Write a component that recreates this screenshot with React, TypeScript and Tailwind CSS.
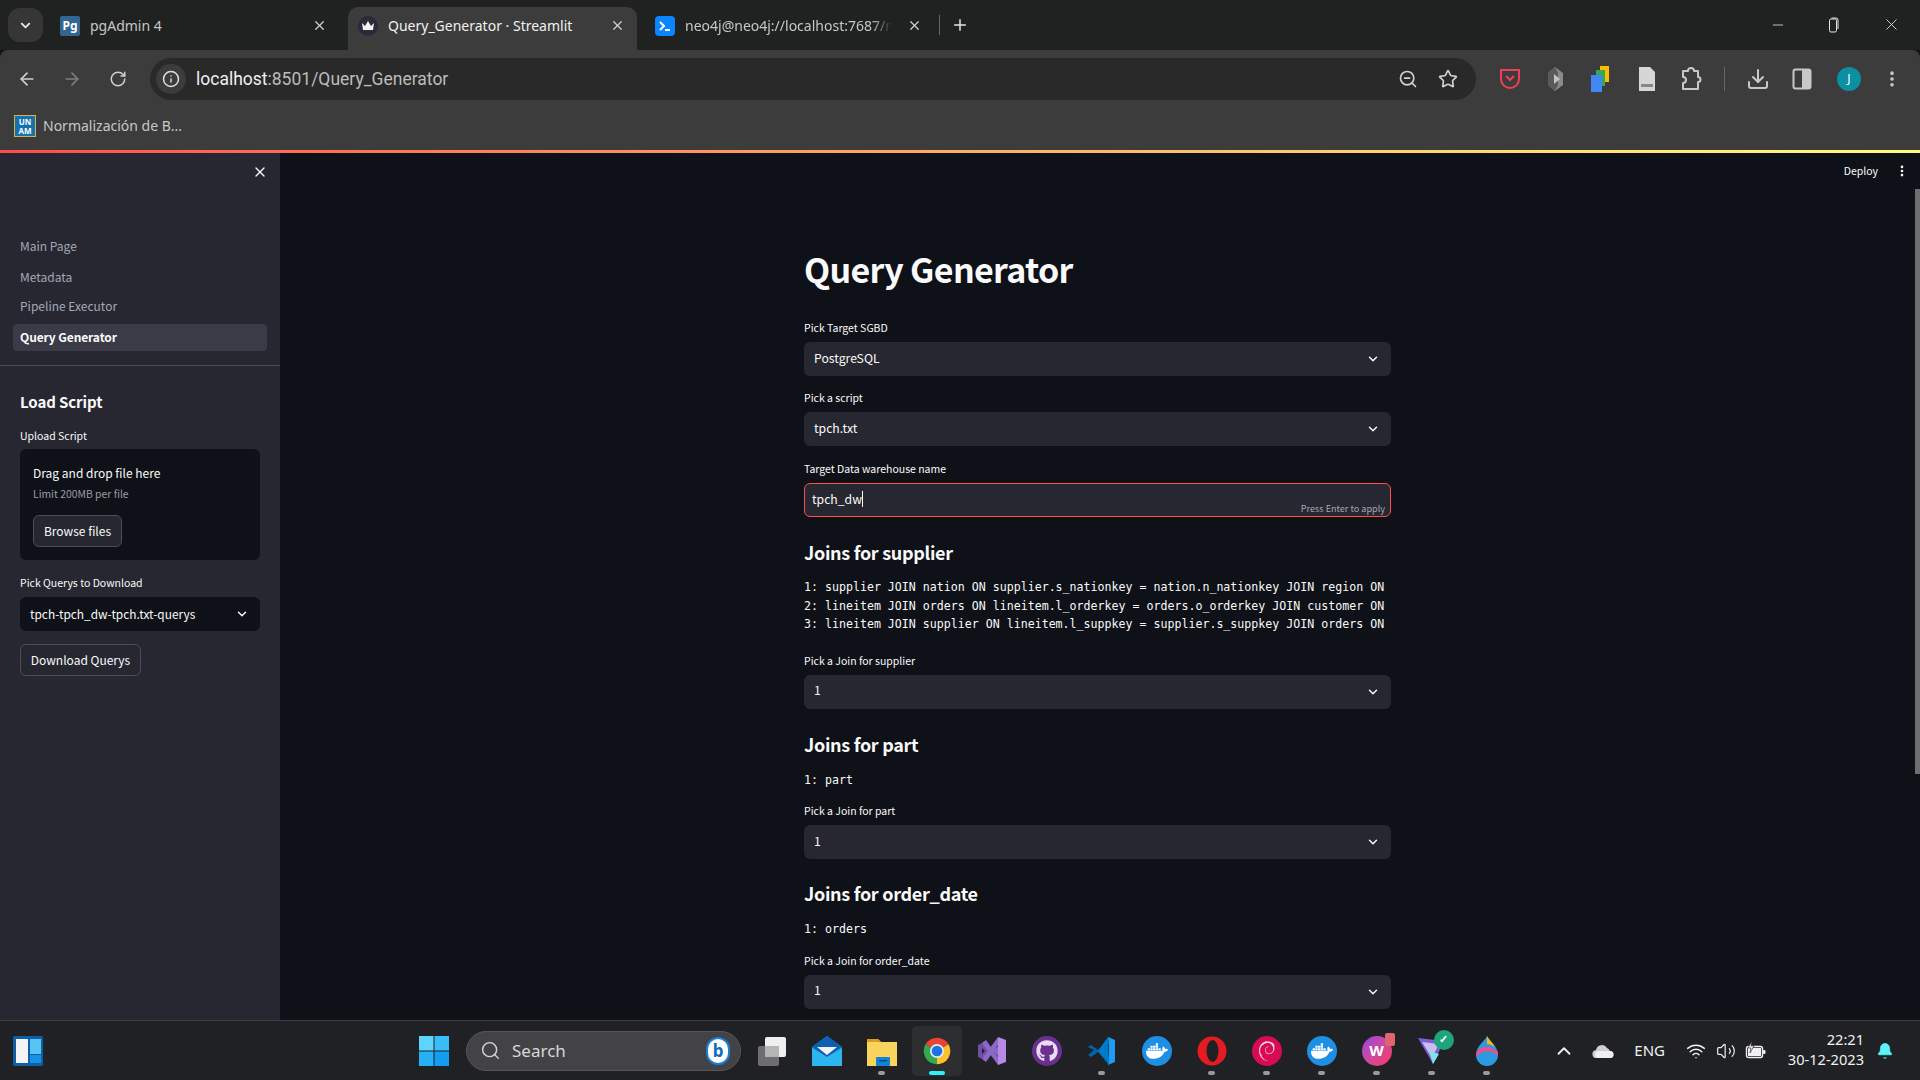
import React from "react";
import {
  ArrowLeft,
  ArrowRight,
  RotateCw,
  Info,
  ZoomOut,
  Star,
  Download,
  EllipsisVertical,
  ChevronDown,
  ChevronUp,
  X,
  Plus,
  Minus,
  Bell,
  Wifi,
  Volume2,
  Search,
} from "lucide-react";
import { FaDocker, FaGithub } from "react-icons/fa";
import { SiDebian } from "react-icons/si";

function Field({ label, value, className }: { label: string; value: string; className?: string }) {
  return (
    <div className={className}>
      <div className="mb-[7px] h-[14px] text-[10.5px] leading-[14px] text-[#fafafa]">{label}</div>
      <div className="flex h-[34px] items-center justify-between rounded-[6px] bg-[#262730] pl-[10px] pr-[11px] text-[12.2px] text-[#fafafa]">
        <span className="pb-[2px]">{value}</span>
        <ChevronDown size={14} strokeWidth={2.5} />
      </div>
    </div>
  );
}

function Heading({ children, className }: { children: React.ReactNode; className?: string }) {
  return <h3 className={`h-[32px] text-[18px] font-semibold leading-[30px] tracking-[-0.3px] text-[#fafafa] ${className}`}>{children}</h3>;
}

function Mono({ lines, className }: { lines: string[]; className?: string }) {
  return (
    <div className={`overflow-hidden whitespace-pre font-['DejaVu_Sans_Mono',monospace] text-[11.62px] leading-[18.5px] text-[#fafafa] ${className}`}>
      {lines.map((l) => (
        <div key={l}>{l}</div>
      ))}
    </div>
  );
}

function Tab({ icon, title, active, className, titleClass }: { icon: React.ReactNode; title: string; active?: boolean; className: string; titleClass?: string }) {
  return (
    <div className={`flex h-[43px] items-center rounded-t-[10px] pb-[6px] ${active ? "bg-[#3c3c3c] text-[#f1f1f1]" : "text-[#c7c7c7]"} ${className}`}>
      <span className="flex w-[20px] shrink-0 items-center justify-center">{icon}</span>
      <span className={`ml-[10px] flex-1 overflow-hidden whitespace-nowrap text-[14px] ${titleClass ?? ""}`}>{title}</span>
      <X size={15} strokeWidth={2} className="shrink-0 text-[#d0d0d0]" />
    </div>
  );
}

function Crown() {
  return (
    <span className="flex h-[20px] w-[20px] items-center justify-center rounded-full bg-[#2a2a3c]">
      <svg width="14" height="12" viewBox="0 0 14 12">
        <path fill="#f2f2f2" d="M1 3l3 3 3-5 3 5 3-3-1 7H2z" />
      </svg>
    </span>
  );
}

function TaskItem({ children, dot, active }: { children: React.ReactNode; dot?: boolean; active?: boolean }) {
  return (
    <div className={`relative flex h-[50px] w-[50px] items-center justify-center rounded-[5px] ${active ? "bg-[#2d2e30]" : ""} mx-[2.5px]`}>
      {children}
      {dot && <span className="absolute bottom-[1px] h-[4px] w-[7px] rounded-full bg-[#9a9a9a]" />}
      {active && <span className="absolute bottom-[1px] h-[4px] w-[16px] rounded-full bg-[#2ff0fb]" />}
    </div>
  );
}

function Round({ bg, children }: { bg: string; children: React.ReactNode }) {
  return <span className={`flex h-[30px] w-[30px] items-center justify-center rounded-full ${bg}`}>{children}</span>;
}

function ChromeIcon() {
  return (
    <svg width="32" height="32" viewBox="0 0 48 48">
      <path fill="#ea4335" d="M24 24L6.7 14A20 20 0 0 1 41.3 14Z" />
      <path fill="#fbc02d" d="M24 24L41.3 14A20 20 0 0 1 24 44Z" />
      <path fill="#34a853" d="M24 24L24 44A20 20 0 0 1 6.7 14Z" />
      <circle cx="24" cy="24" r="10.5" fill="#e8eaed" />
      <circle cx="24" cy="24" r="8" fill="#1a73e8" />
    </svg>
  );
}

function VsCodeIcon() {
  return (
    <svg width="30" height="30" viewBox="0 0 30 30">
      <path fill="#0065a9" d="M1 11l3-2 7 5 11-13 0 7-10 7 10 7 0 7-11-13-7 5-3-2 6-5z" />
      <path fill="#1f9cf0" d="M21 1l7 3v22l-7 3 1-4V5z" />
      <path fill="#007acc" d="M21 1l1 27-11-13z" />
    </svg>
  );
}

function VisualStudioIcon() {
  return (
    <svg width="30" height="30" viewBox="0 0 30 30">
      <path fill="#6f4fa8" d="M1 9l4-2 8 8-8 8-4-2zM5 12v6l3-3z" fillRule="evenodd" />
      <path fill="#8e68c8" d="M5 23l16-22v8L9 26z" />
      <path fill="#8e68c8" d="M5 7l16 22v-8L9 4z" />
      <path fill="#b48ae6" d="M21 1l8 3v22l-8 3z" />
      <path fill="#8e68c8" d="M21 10l-5 5 5 5z" />
    </svg>
  );
}

export default function App() {
  const tabLine = "bg-[#202221]";
  return (
    <div className="flex h-[1080px] w-[1920px] flex-col overflow-hidden bg-[#0e1117] font-['Noto_Sans_CJK_SC',sans-serif]">
      {/* chrome tabs */}
      <div className={`flex h-[50px] items-end ${tabLine} font-['Noto_Sans',sans-serif]`}>
        <div className="mb-[8px] ml-[8px] flex h-[34px] w-[35px] items-center justify-center rounded-[12px] bg-[#363636] text-[#e6e6e6]">
          <ChevronDown size={15} strokeWidth={3} />
        </div>
        <Tab
          className="ml-[17px] w-[279px] pr-[12px]"
          title="pgAdmin 4"
          icon={
            <span className="flex h-[20px] w-[20px] items-center justify-center rounded-[2px] bg-[#326690] text-[12px] font-bold leading-none text-white">Pg</span>
          }
        />
        <Tab className="ml-[9px] w-[289px] pl-[10px] pr-[12px]" title="Query_Generator · Streamlit" active icon={<Crown />} />
        <Tab
          className="ml-[18px] w-[268px] pr-[1px]"
          titleClass="mr-[15px] [mask-image:linear-gradient(to_right,black_90%,transparent)]"
          title="neo4j@neo4j://localhost:7687/n"
          icon={
            <span className="flex h-[20px] w-[20px] items-center justify-center rounded-[4px] bg-[#0a84ff]">
              <svg width="14" height="12" viewBox="0 0 14 12">
                <path d="M2 2l4 4-4 4" fill="none" stroke="#fff" strokeWidth="2" />
                <path d="M7 10h5" stroke="#fff" strokeWidth="2" />
              </svg>
            </span>
          }
        />
        <div className="mb-[15px] ml-[16px] h-[20px] w-px bg-[#666]" />
        <Plus size={18} strokeWidth={2} className="mb-[16px] ml-[11px] text-[#e6e6e6]" />
        <div className="mb-[16px] ml-auto flex items-center text-[#e4e4e4]">
          <Minus size={16} strokeWidth={1.2} className="mr-[40px]" />
          <svg width="14" height="16" viewBox="0 0 14 16" className="mr-[42px]">
            <rect x="3.5" y="2" width="7" height="13" rx="1.5" fill="#202221" stroke="currentColor" />
            <path d="M5.5 1h4.5a2 2 0 0 1 2 2v9" fill="none" stroke="currentColor" />
          </svg>
          <X size={19} strokeWidth={1.1} className="mr-[19px]" />
        </div>
      </div>

      {/* toolbar */}
      <div className="flex h-[100px] flex-col rounded-t-[8px] bg-[#3c3c3c] font-['Noto_Sans',sans-serif]">
        <div className="flex h-[56px] items-start pt-[8px]">
          <div className="flex h-[42px] w-[150px] items-center pl-[17px] text-[#d0d0d0]">
            <ArrowLeft size={20} strokeWidth={2} />
            <ArrowRight size={20} strokeWidth={2} className="ml-[25px] text-[#7d7d7d]" />
            <RotateCw size={18} strokeWidth={2} className="ml-[27px]" />
          </div>
          <div className="flex h-[42px] w-[1326px] items-center rounded-full bg-[#292929] pl-[6px] pr-[18px]">
            <span className="flex h-[30px] w-[30px] items-center justify-center rounded-full bg-[#3c3c3c] text-[#e0e0e0]">
              <Info size={18} />
            </span>
            <span className="ml-[10px] pt-px font-['Roboto',sans-serif] text-[17.5px] text-[#f0f0f0]">
              localhost<span className="text-[#bcbcbc]">:8501/Query_Generator</span>
            </span>
            <ZoomOut size={20} className="ml-auto text-[#d0d0d0]" />
            <Star size={20} strokeWidth={2} className="ml-[20px] text-[#d0d0d0]" />
          </div>
          <div className="flex h-[42px] flex-1 items-center text-[#c8c8c8]">
            <svg width="22" height="24" viewBox="0 0 22 24" className="ml-[23px]">
              <path d="M2 3h18v9a9 9 0 0 1-18 0z" fill="none" stroke="#ef3f56" strokeWidth="2" />
              <path d="M7 9l4 4 4-4" fill="none" stroke="#ef3f56" strokeWidth="2" />
            </svg>
            <svg width="20" height="26" viewBox="0 0 20 26" className="ml-[24px]">
              <path d="M10 1l8 6v12l-8 6-7-6V7z" fill="#8a8a8a" />
              <path d="M10 1L3 7v12l7 6 3-6V7z" fill="#5a5a5a" />
              <path d="M9 8l6 5-6 5z" fill="#c4c4c4" />
            </svg>
            <svg width="22" height="28" viewBox="0 0 22 28" className="ml-[25px]">
              <rect x="10" y="1" width="9" height="16" fill="#fbbc04" />
              <rect x="6" y="5" width="9" height="16" fill="#34a853" />
              <rect x="1" y="10" width="11" height="17" fill="#4285f4" />
            </svg>
            <svg width="18" height="26" viewBox="0 0 18 26" className="ml-[26px]">
              <path d="M1 1h11l5 5v19H1z" fill="#d6d6d6" />
              <rect x="3" y="18" width="12" height="3" fill="#888" />
            </svg>
            <svg width="22" height="26" viewBox="0 0 22 26" className="ml-[24px]">
              <path d="M3 5h5a3 3 0 0 1 6 0h4v6a2.500 2.500 0 0 1 0 5v7H3v-6a3 3 0 0 0 0-6z" fill="none" stroke="#c8c8c8" strokeWidth="2" strokeLinejoin="round" />
            </svg>
            <div className="ml-[22px] h-[24px] w-px bg-[#666]" />
            <Download size={24} className="ml-[21px]" />
            <svg width="20" height="22" viewBox="0 0 20 22" className="ml-[22px]">
              <rect x="1.5" y="1.5" width="17" height="19" rx="2" fill="none" stroke="#c8c8c8" strokeWidth="2" />
              <rect x="10" y="2" width="8" height="18" fill="#c8c8c8" />
            </svg>
            <span className="ml-[25px] flex h-[24px] w-[24px] items-center justify-center rounded-full bg-[#0b8fa3] text-[12px] text-white">J</span>
            <EllipsisVertical size={20} strokeWidth={2.4} className="ml-[21px]" />
          </div>
        </div>
        <div className="flex h-[40px] items-center pb-[1px] pl-[15px]">
          <span className="flex h-[20px] w-[20px] flex-col items-center justify-center bg-[#1473ae] text-[8px] font-bold leading-[9px] text-white outline-1 outline-[#d7b24a]">
            <span>UN</span>
            <span>AM</span>
          </span>
          <span className="ml-[8px] text-[14px] text-[#c8c8c8]">Normalización de B...</span>
        </div>
      </div>

      <div className="h-[3px] bg-gradient-to-r from-[#ff4b4b] to-[#fffd80]" />

      {/* streamlit page */}
      <div className="relative flex min-h-0 flex-1">
        <aside className="flex w-[280px] shrink-0 flex-col bg-[#262730] text-[#fafafa]">
          <div className="flex h-[81px] justify-end pr-[12px] pt-[11px]">
            <X size={16} strokeWidth={2} />
          </div>
          <nav className="flex flex-col gap-[3px] px-[13px] text-[12px] text-[#a3a8b4]">
            <div className="flex h-[27px] items-center px-[7px] pb-[3px]">Main Page</div>
            <div className="flex h-[27px] items-center px-[7px] pb-[2px]">Metadata</div>
            <div className="flex h-[27px] items-center px-[7px] pb-[3px]">Pipeline Executor</div>
            <div className="flex h-[27px] items-center rounded-[4px] bg-[#3a3b47] px-[7px] pb-[2px] font-semibold tracking-[-0.1px] text-[#fafafa]">Query Generator</div>
          </nav>
          <div className="mt-[14px] h-px bg-[#4a4b55]" />
          <div className="px-[20px]">
            <div className="mt-[24px] h-[24px] text-[15px] font-semibold leading-[24px] tracking-[-0.1px]">Load Script</div>
            <div className="mb-[6px] mt-[15px] h-[14px] text-[10.5px] leading-[14px]">Upload Script</div>
            <div className="h-[111px] rounded-[6px] bg-[#0e1117] pl-[13px] pt-[15px]">
              <div className="text-[12px] leading-[18px]">Drag and drop file here</div>
              <div className="mt-[5px] text-[10.4px] leading-[14px] text-[#9a9da6]">Limit 200MB per file</div>
              <div className="mt-[14px] flex h-[32px] w-[89px] items-center justify-center rounded-[6px] border border-[#4c4d57] bg-[#262730] pb-[1px] text-[12px]">Browse files</div>
            </div>
            <div className="mb-[7px] mt-[16px] h-[14px] text-[10.5px] leading-[14px]">Pick Querys to Download</div>
            <div className="flex h-[34px] items-center justify-between rounded-[6px] bg-[#0e1117] pl-[10px] pr-[11px] text-[11.9px]">
              <span className="pb-[1px]">tpch-tpch_dw-tpch.txt-querys</span>
              <ChevronDown size={14} strokeWidth={2.5} />
            </div>
            <div className="mt-[13px] flex h-[32px] w-[121px] items-center justify-center rounded-[6px] border border-[#4c4d57] text-[12px]">Download Querys</div>
          </div>
        </aside>

        <main className="min-w-0 flex-1 overflow-hidden">
          <div className="ml-[524px] w-[587px] pt-[94px]">
            <h1 className="h-[44px] text-[34px] font-bold leading-[44px] tracking-[-0.67px] text-[#fafafa]">Query Generator</h1>
            <Field className="mt-[30px]" label="Pick Target SGBD" value="PostgreSQL" />
            <Field className="mt-[15px]" label="Pick a script" value="tpch.txt" />
            <div className="mt-[16px]">
              <div className="mb-[7px] h-[14px] text-[10.5px] leading-[14px] text-[#fafafa]">Target Data warehouse name</div>
              <div className="relative flex h-[34px] items-center rounded-[6px] border border-[#ff4b4b] bg-[#262730] pb-[2px] pl-[7px] text-[12.2px] text-[#fafafa]">
                <span>tpch_dw</span>
                <span className="h-[16px] w-px bg-white" />
                <span className="absolute bottom-[2px] right-[5px] text-[9.1px] leading-[12px] text-[#a3a8b4]">Press Enter to apply</span>
              </div>
            </div>
            <Heading className="mt-[20px]">Joins for supplier</Heading>
            <Mono
              className="mt-[9px]"
              lines={[
                "1: supplier JOIN nation ON supplier.s_nationkey = nation.n_nationkey JOIN region ON",
                "2: lineitem JOIN orders ON lineitem.l_orderkey = orders.o_orderkey JOIN customer ON",
                "3: lineitem JOIN supplier ON lineitem.l_suppkey = supplier.s_suppkey JOIN orders ON",
              ]}
            />
            <Field className="mt-[20px]" label="Pick a Join for supplier" value="1" />
            <Heading className="mt-[20px]">Joins for part</Heading>
            <Mono className="mt-[10px]" lines={["1: part"]} />
            <Field className="mt-[15px]" label="Pick a Join for part" value="1" />
            <Heading className="mt-[19px]">Joins for order_date</Heading>
            <Mono className="mt-[10px]" lines={["1: orders"]} />
            <Field className="mt-[15px]" label="Pick a Join for order_date" value="1" />
          </div>
        </main>

        <div className="absolute right-[11px] top-[11px] flex items-center text-[#fafafa]">
          <span className="text-[10.5px] leading-[14px]">Deploy</span>
          <EllipsisVertical size={14} strokeWidth={2.6} className="ml-[17px]" />
        </div>
        <div className="absolute right-0 top-[36px] h-[585px] w-[5px] bg-[#6e6e6e]" />
      </div>

      {/* windows taskbar */}
      <div className="relative flex h-[60px] shrink-0 items-center border-t border-[#3d3e41] bg-[#202125] font-['Noto_Sans',sans-serif] text-[#f1f1f1]">
        <svg width="30" height="30" viewBox="0 0 30 30" className="ml-[13px]">
          <rect width="30" height="30" rx="2" fill="#0f5ea8" />
          <rect x="3" y="3" width="12" height="24" fill="#f4f4f4" />
          <rect x="17" y="3" width="11" height="15" fill="#57c4f5" />
          <rect x="17" y="19" width="11" height="8" fill="#1a8fe3" />
        </svg>
        <svg width="30" height="30" viewBox="0 0 30 30" className="ml-[376px]">
          <rect x="0" y="0" width="14.5" height="14.5" fill="#5ed4fb" />
          <rect x="15.5" y="0" width="14.5" height="14.5" fill="#39bdf8" />
          <rect x="0" y="15.5" width="14.5" height="14.5" fill="#26b0f6" />
          <rect x="15.5" y="15.5" width="14.5" height="14.5" fill="#119ef2" />
        </svg>
        <div className="ml-[17px] flex h-[40px] w-[275px] items-center rounded-full border border-[#55565a] bg-[#434346] pl-[13px] pr-[10px] text-[#d8d8d8]">
          <Search size={21} strokeWidth={1.6} />
          <span className="ml-[11px] text-[17px]">Search</span>
          <span className="ml-auto flex h-[28px] w-[24px] items-center justify-center rounded-full border-2 border-[#1a7fd6] bg-white text-[17px] font-bold leading-none text-[#0f6cbd]">b</span>
        </div>
        <div className="ml-[3px] flex items-center">
          <TaskItem>
            <svg width="30" height="30" viewBox="0 0 30 30">
              <rect x="1" y="10" width="21" height="20" rx="2" fill="#6e6e6e" />
              <rect x="8" y="1" width="21" height="20" rx="2" fill="#efefef" />
              <rect x="8" y="10" width="14" height="11" fill="#b5b5b5" />
            </svg>
          </TaskItem>
          <TaskItem>
            <svg width="30" height="30" viewBox="0 0 30 30">
              <path d="M0 11L15 0l15 11v19H0z" fill="#1e8fdc" />
              <path d="M0 11L15 0l15 11-15 10z" fill="#0d5fb3" />
              <path d="M5 11h20l-10 8z" fill="#f2f2f2" />
              <path d="M0 12l15 9 15-9v18H0z" fill="#2cb5ee" />
            </svg>
          </TaskItem>
          <TaskItem dot>
            <svg width="30" height="30" viewBox="0 0 30 30">
              <path d="M0 3h11l3 3h16v24H0z" fill="#f9d45c" />
              <path d="M0 3h11l3 3H0z" fill="#d99c1c" />
              <rect x="9" y="21" width="14" height="9" rx="1" fill="#1183d6" />
              <rect x="12" y="24" width="8" height="1.5" fill="#0b4a85" />
            </svg>
          </TaskItem>
          <TaskItem active>
            <ChromeIcon />
          </TaskItem>
          <TaskItem>
            <VisualStudioIcon />
          </TaskItem>
          <TaskItem>
            <Round bg="bg-[#6b2f90]">
              <FaGithub size={22} className="text-[#e9dcf2]" />
            </Round>
          </TaskItem>
          <TaskItem dot>
            <VsCodeIcon />
          </TaskItem>
          <TaskItem>
            <Round bg="bg-[#1d90e5]">
              <FaDocker size={22} className="text-white" />
            </Round>
          </TaskItem>
          <TaskItem dot>
            <svg width="30" height="30" viewBox="0 0 30 30">
              <circle cx="15" cy="15" r="14.5" fill="#e51b23" />
              <ellipse cx="15.5" cy="15" rx="6" ry="11" fill="#202125" />
            </svg>
          </TaskItem>
          <TaskItem dot>
            <Round bg="bg-[#d70a53]">
              <SiDebian size={20} className="text-[#f6d8e4]" />
            </Round>
          </TaskItem>
          <TaskItem dot>
            <Round bg="bg-[#1d90e5]">
              <FaDocker size={22} className="text-white" />
            </Round>
          </TaskItem>
          <TaskItem dot>
            <div className="relative">
              <span className="flex h-[30px] w-[30px] items-center justify-center rounded-full bg-gradient-to-br from-[#9b3fe0] to-[#ff2d55] text-[15px] font-bold leading-none text-white">W</span>
              <span className="absolute -right-[3px] -top-[3px] h-[13px] w-[10px] rounded-[2px] bg-[#e2646c]" />
            </div>
          </TaskItem>
          <TaskItem dot>
            <div className="relative">
              <svg width="30" height="30" viewBox="0 0 30 30">
                <path d="M1 2l26 3-11 23z" fill="#7a5fd6" />
                <path d="M5 6l17 2-7 14z" fill="#c9bdf2" />
                <path d="M16 28l-4-13 10 3z" fill="#7fe3e8" />
              </svg>
              <span className="absolute -right-[7px] -top-[6px] flex h-[20px] w-[20px] items-center justify-center rounded-full bg-[#1fa37a] text-[11px] font-bold text-white">✓</span>
            </div>
          </TaskItem>
          <TaskItem dot>
            <svg width="24" height="32" viewBox="0 0 24 32">
              <path d="M12 1c2 5 11 10 11 19a11 11 0 0 1-22 0C1 11 10 6 12 1z" fill="#2a9be0" />
              <path d="M1.5 17C6 10 16 11 23 17l0 4C16 15 7 15 1.5 22z" fill="#e6518e" />
              <path d="M12 1c2 4 6 7 8 11-3-2-6-3-8-3z" fill="#f7b51c" />
            </svg>
          </TaskItem>
        </div>
        <div className="ml-auto flex items-center pr-[26px]">
          <ChevronUp size={22} strokeWidth={2} />
          <svg width="22" height="14" viewBox="0 0 22 14" className="ml-[17px]">
            <path d="M5 14a4 4 0 0 1-1-8 6 6 0 0 1 11-2 5 5 0 0 1 3 3 3.500 3.500 0 0 1 0 7z" fill="#cfcfcf" />
            <path d="M5 14a4 4 0 0 1 0-7h13a3.500 3.500 0 0 1 0 7z" fill="#f0f0f0" />
          </svg>
          <span className="ml-[20px] text-[15px]">ENG</span>
          <Wifi size={20} strokeWidth={1.8} className="ml-[21px]" />
          <Volume2 size={20} strokeWidth={1.4} className="ml-[10px]" />
          <svg width="22" height="20" viewBox="0 0 22 20" className="ml-[9px]">
            <rect x="1.500" y="5.500" width="16" height="11" rx="2" fill="none" stroke="currentColor" strokeWidth="1.4" />
            <rect x="3" y="7" width="13" height="8" fill="currentColor" />
            <rect x="18" y="9" width="2.500" height="4" rx="1" fill="currentColor" />
            <path d="M7 0L3 7h3l-1 5 4-7H6z" fill="currentColor" stroke="#202125" strokeWidth="0.6" />
          </svg>
          <div className="ml-[13px] flex w-[84px] flex-col items-end pb-[3px] text-[14.6px] leading-[20px]">
            <span>22:21</span>
            <span>30-12-2023</span>
          </div>
          <Bell size={18} fill="#5cf3fb" strokeWidth={1} className="ml-[12px] text-[#5cf3fb]" />
        </div>
      </div>
    </div>
  );
}
